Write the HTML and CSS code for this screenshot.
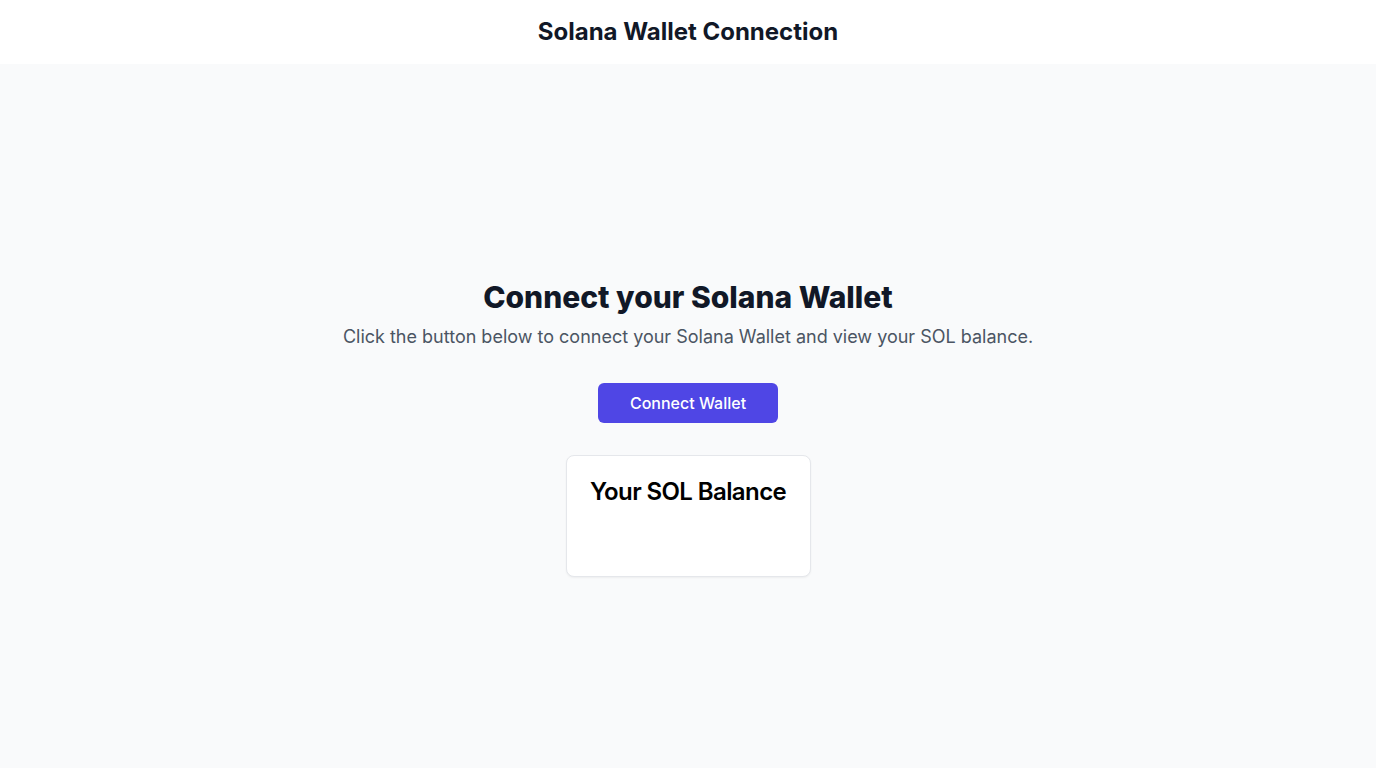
FILE: index.html
```html
<!DOCTYPE html>
<html lang="en">
<head>
<meta charset="utf-8">
<title>Solana Wallet Connection</title>
<link rel="stylesheet" href="styles.css">
</head>
<body>
<header class="topbar">
  <h1 class="topbar-title">Solana Wallet Connection</h1>
</header>
<main class="main">
  <section class="intro">
    <h2 class="intro-title">Connect your Solana Wallet</h2>
    <p class="intro-text">Click the button below to connect your Solana Wallet and view your SOL balance.</p>
  </section>
  <button class="connect-btn" type="button">Connect Wallet</button>
  <div class="balance-card">
    <h3 class="balance-title">Your SOL Balance</h3>
    <div class="balance-body"></div>
  </div>
</main>
</body>
</html>
```

FILE: styles.css
```css
* { box-sizing: border-box; }
html, body { margin: 0; padding: 0; }
body {
  font-family: Inter, "Noto Sans", sans-serif;
  background: #f9fafb;
  color: #111827;
  height: 768px;
  overflow: hidden;
}
.topbar {
  height: 64px;
  background: #ffffff;
  display: flex;
  align-items: center;
  justify-content: center;
}
.topbar-title {
  margin: 0;
  font-size: 24px;
  line-height: 32px;
  font-weight: 700;
  color: #111827;
  padding-bottom: 1px;
}
.main {
  height: 704px;
  display: flex;
  flex-direction: column;
  align-items: center;
  justify-content: center;
  padding-top: 24px;
}
.intro { text-align: center; }
.intro-title {
  margin: 0 0 8px;
  font-size: 30px;
  line-height: 36px;
  font-weight: 800;
  color: #111827;
}
.intro-text {
  margin: 0;
  font-size: 18px;
  line-height: 28px;
  color: #4b5563;
}
.connect-btn {
  margin-top: 32px;
  width: 180px;
  height: 40px;
  border: none;
  border-radius: 6px;
  background: #4f46e5;
  color: #ffffff;
  font-family: inherit;
  font-size: 16px;
  font-weight: 500;
  padding: 0;
  white-space: nowrap;
}
.balance-card {
  margin-top: 32px;
  width: 245px;
  height: 122px;
  background: #ffffff;
  border: 1px solid #e5e7eb;
  border-radius: 8px;
  box-shadow: 0 1px 2px rgba(0,0,0,0.05);
  padding: 20px 0 24px;
  text-align: center;
}
.balance-title {
  margin: 0;
  font-size: 24px;
  line-height: 32px;
  font-weight: 600;
  letter-spacing: -0.025em;
  color: #000000;
  white-space: nowrap;
}
```
